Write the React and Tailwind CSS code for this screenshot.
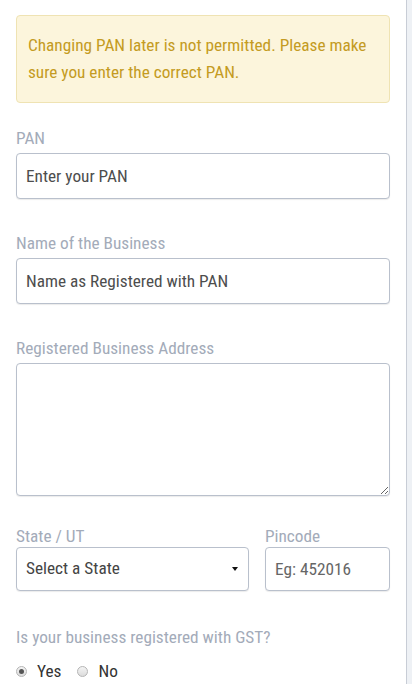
const field = 'block w-full rounded-[4px] border border-[#b9c0cc] bg-white px-[9px] text-[17.25px] text-[#444] shadow-[0_1px_1px_rgba(0,0,0,0.08)] outline-none placeholder:text-[#4d4d4d]';
const label = 'block text-[17.25px] leading-[22px] text-[#a3abb9]';

function Radio({ checked, children }) {
  return (
    <label className="inline-flex items-center gap-[10px] text-[17.25px] leading-[22px] text-[#333]">
      <span className="grid h-[11px] w-[11px] place-items-center rounded-full border border-[#b5b5b5] bg-gradient-to-b from-[#f4f4f4] to-[#dcdcdc]">
        {checked && <span className="h-[5px] w-[5px] rounded-full bg-[#555]" />}
      </span>
      {children}
    </label>
  );
}

export default function App() {
  return (
    <div className="flex min-h-[684px] bg-[#eef1f5] font-['Roboto',sans-serif] [font-stretch:75%]">
      <div className="w-[407px] border-r border-[#c8cdd6] bg-white px-4 pb-4">
        <div className="mt-[15px] rounded-[4px] border border-[#efe3b3] bg-[#fcf5dc] px-[11px] py-4 text-[17.25px] leading-[27px] text-[#c49b22]">
          Changing PAN later is not permitted. Please make sure you enter the correct PAN.
        </div>

        <div className="mt-6">
          <span className={label}>PAN</span>
          <input className={`${field} mt-1 h-[46px]`} placeholder="Enter your PAN" />
        </div>

        <div className="mt-[33px]">
          <span className={label}>Name of the Business</span>
          <input className={`${field} mt-1 h-[46px]`} placeholder="Name as Registered with PAN" />
        </div>

        <div className="mt-[33px]">
          <span className={label}>Registered Business Address</span>
          <textarea className={`${field} mt-1 h-[133px] py-2`} />
        </div>

        <div className="mt-[29px] flex gap-4">
          <div className="w-[233px]">
            <span className={label}>State / UT</span>
            <div className="relative">
              <select className={`${field} h-[44px] appearance-none bg-[#f9f9f9] text-[#1f1f1f]`}>
                <option>Select a State</option>
              </select>
              <span className="pointer-events-none absolute right-[11px] top-[20px] h-0 w-0 border-x-[3px] border-t-[4px] border-x-transparent border-t-[#111]" />
            </div>
          </div>
          <div className="flex-1">
            <span className={label}>Pincode</span>
            <input className={`${field} h-[44px] placeholder:text-[#666]`} placeholder="Eg: 452016" />
          </div>
        </div>

        <div className="mt-[35px]">
          <span className={label}>Is your business registered with GST?</span>
          <div className="mt-3 flex items-center gap-[16px]">
            <Radio checked>Yes</Radio>
            <Radio>No</Radio>
          </div>
        </div>
      </div>
    </div>
  );
}
